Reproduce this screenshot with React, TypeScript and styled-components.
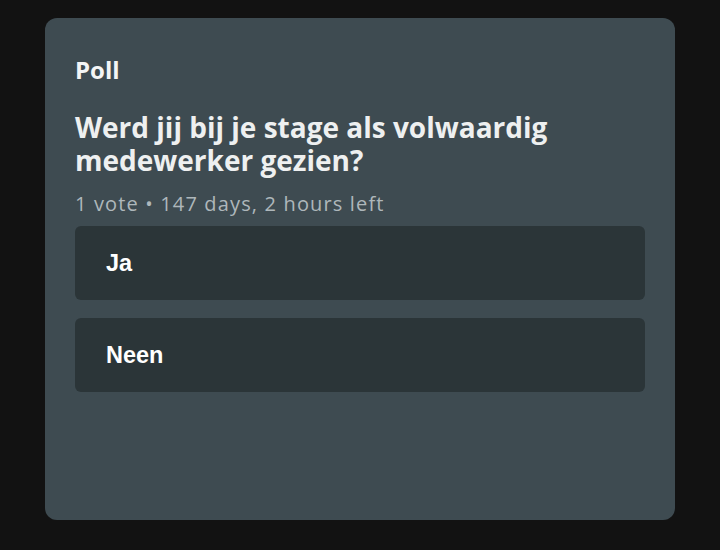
import React from 'react';
import styled, { createGlobalStyle } from 'styled-components';

const GlobalStyle = createGlobalStyle`
  html, body {
    margin: 0;
    padding: 0;
    background: #121212;
  }
  body {
    font-family: "Open Sans", Lato, sans-serif;
  }
`;

interface PollOption {
  label: string;
}

const options: PollOption[] = [{ label: 'Ja' }, { label: 'Neen' }];

const App: React.FC = () => {
  return (
    <>
      <GlobalStyle />
      <Page>
        <Card>
          <Kicker>Poll</Kicker>
          <Question>Werd jij bij je stage als volwaardig medewerker gezien?</Question>
          <Meta>1 vote • 147 days, 2 hours left</Meta>
          <OptionList>
            {options.map((o) => (
              <OptionButton key={o.label}>{o.label}</OptionButton>
            ))}
          </OptionList>
        </Card>
      </Page>
    </>
  );
};

const Page = styled.div`
  width: 720px;
  height: 550px;
  padding: 18px 45px 30px;
  box-sizing: border-box;
  background: #121212;
`;

const Card = styled.section`
  height: 502px;
  box-sizing: border-box;
  background: #3e4b51;
  border-radius: 12px;
  padding: 37px 30px 0;
  display: flex;
  flex-direction: column;
`;

const Kicker = styled.div`
  font-size: 24px;
  font-weight: 700;
  line-height: 30px;
  color: #f4f5f5;
`;

const Question = styled.h2`
  margin: 26px 0 0;
  font-size: 28px;
  font-weight: 700;
  line-height: 33px;
  color: #eef0f0;
  max-width: 520px;
`;

const Meta = styled.div`
  margin-top: 15px;
  font-size: 20px;
  line-height: 24px;
  letter-spacing: 1.15px;
  color: #aeb7bb;
`;

const OptionList = styled.div`
  margin-top: 10px;
  display: flex;
  flex-direction: column;
  gap: 18px;
`;

const OptionButton = styled.button`
  height: 74px;
  border: none;
  border-radius: 6px;
  background: #2b3538;
  color: #ffffff;
  text-align: left;
  padding: 0 31px;
  font-family: "Liberation Sans", Arial, sans-serif;
  font-size: 23.5px;
  font-weight: 700;
`;

export default App;
